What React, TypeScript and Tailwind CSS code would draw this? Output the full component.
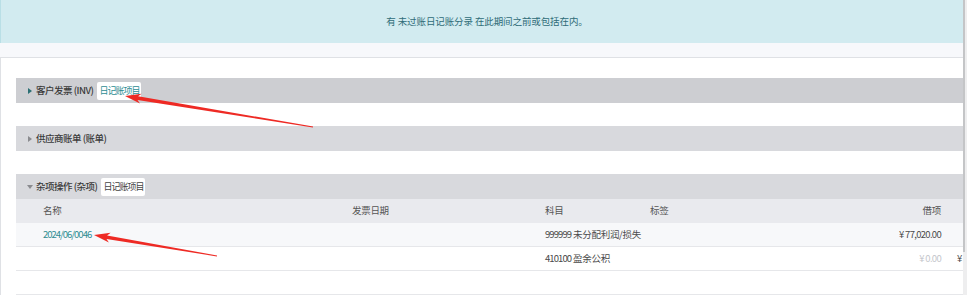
import React from "react";

type Pt = [number, number];

function arrowPoints(tip: Pt, tail: Pt, headLen = 16, headHalf = 5, shaft0 = 1.8, shaft1 = 0.4): string {
  const dx = tail[0] - tip[0];
  const dy = tail[1] - tip[1];
  const len = Math.hypot(dx, dy);
  const ux = dx / len;
  const uy = dy / len;
  const nx = -uy;
  const ny = ux;
  const bx = tip[0] + ux * headLen;
  const by = tip[1] + uy * headLen;
  const sx = tip[0] + ux * (headLen - 3);
  const sy = tip[1] + uy * (headLen - 3);
  const pts: Pt[] = [
    tip,
    [bx + nx * headHalf, by + ny * headHalf],
    [sx + nx * shaft0, sy + ny * shaft0],
    [tail[0] + nx * shaft1, tail[1] + ny * shaft1],
    [tail[0] - nx * shaft1, tail[1] - ny * shaft1],
    [sx - nx * shaft0, sy - ny * shaft0],
    [bx - nx * headHalf, by - ny * headHalf],
  ];
  return pts.map((p) => `${p[0].toFixed(1)},${p[1].toFixed(1)}`).join(" ");
}

function Caret({ open, color }: { open?: boolean; color: string }) {
  return open ? (
    <svg width="6" height="4" viewBox="0 0 6 4" className="shrink-0">
      <polygon points="0,0 6,0 3,4" fill={color} />
    </svg>
  ) : (
    <svg width="4" height="6" viewBox="0 0 4 6" className="shrink-0">
      <polygon points="0,0 4,3 0,6" fill={color} />
    </svg>
  );
}

function SectionHeader({
  title,
  badge,
  badgeColor,
  bg,
  open,
  caretColor,
}: {
  title: React.ReactNode;
  badge?: string;
  badgeColor?: string;
  bg: string;
  open?: boolean;
  caretColor: string;
}) {
  return (
    <div className={`h-[25px] ${bg} flex items-center pl-[11px]`}>
      <div className="w-[6px] flex justify-center">
        <Caret open={open} color={caretColor} />
      </div>
      <span className="ml-[3px] text-[9.5px] font-medium text-[#3b3b3b] leading-none tracking-[-0.5px] whitespace-pre">{title}</span>
      {badge && (
        <span
          className={`ml-[4px] h-[18px] px-[2px] bg-white rounded-[2px] flex items-center text-[9px] leading-none tracking-[-1px] ${badgeColor}`}
        >
          {badge}
        </span>
      )}
    </div>
  );
}

const Num = ({ children }: { children: React.ReactNode }) => (
  <span className="tracking-[-0.9px]">{children}</span>
);

function Row({
  bg,
  name,
  date,
  account,
  label,
  debit,
  debitMuted,
  credit,
  creditMuted,
  header,
}: {
  bg: string;
  name?: React.ReactNode;
  date?: string;
  account?: React.ReactNode;
  label?: string;
  debit?: string;
  debitMuted?: boolean;
  credit?: string;
  creditMuted?: boolean;
  header?: boolean;
}) {
  const txt = header ? "text-[#555]" : "text-[#4a4a4a]";
  return (
    <div className={`h-[24px] ${bg} ${header ? "" : "border-b border-[#e6e7ea]"} flex items-center pl-[27px] text-[9.5px] leading-none ${txt} whitespace-nowrap tracking-[-0.3px]`}>
      <div className="w-[309px] shrink-0">{name}</div>
      <div className="w-[193px] shrink-0">{date}</div>
      <div className="w-[105px] shrink-0">{account}</div>
      <div className="w-[230px] shrink-0">{label}</div>
      <div className={`w-[61px] shrink-0 text-right ${debitMuted ? "text-[#c4c6cb]" : ""}`}>
        {debit && (header ? debit : <span className="tracking-[-0.7px]">{debit}</span>)}
      </div>
      <div className={`ml-[10px] w-[48px] shrink-0 text-right ${creditMuted ? "text-[#c4c6cb]" : ""}`}>
        {credit && <span className="tracking-[-0.7px]">{credit}</span>}
      </div>
    </div>
  );
}

export default function App() {
  return (
    <div className="relative w-[967px] h-[295px] overflow-hidden bg-white flex font-['Noto_Sans_CJK_SC','Noto_Sans',sans-serif]">
      <div className="w-[963px] h-full flex flex-col overflow-hidden">
        <div className="h-[43px] shrink-0 bg-[#d2ebf0] border-l border-[#b9dfe6] flex items-center justify-center pl-[10px]">
          <span className="text-[9.5px] text-[#2f6b78] tracking-[-0.1px] leading-none">有 未过账日记账分录 在此期间之前或包括在内。</span>
        </div>
        <div className="h-[14px] shrink-0 bg-[#f7f8fb]" />
        <div className="flex-1 border-t border-l border-[#dfe1e5] pl-[15px] pt-[20px] flex flex-col">
          <SectionHeader
            title="客户发票 (INV)"
            badge="日记账项目"
            badgeColor="text-[#2e8d93]"
            bg="bg-[#cdced2]"
            caretColor="#2b6f74"
          />
          <div className="h-[23px]" />
          <SectionHeader title="供应商账单 (账单)" bg="bg-[#d8d9dd]" caretColor="#8a8b8f" />
          <div className="h-[23px]" />
          <SectionHeader
            title="杂项操作 (杂项)"
            badge="日记账项目"
            badgeColor="text-[#444]"
            bg="bg-[#d8d9dd]"
            open
            caretColor="#8a8b8f"
          />
          <Row header bg="bg-[#e9eaee]" name="名称" date="发票日期" account="科目" label="标签" debit="借项" />
          <Row
            bg="bg-[#f7f8fa]"
            name={<span className="text-[#2f8d92] tracking-[-1px]">2024/06/0046</span>}
            account={<><Num>999999</Num> 未分配利润/损失</>}
            debit="¥ 77,020.00"
            credit="¥ 0.00"
            creditMuted
          />
          <Row bg="bg-white" account={<><Num>410100</Num> 盈余公积</>} debit="¥ 0.00" debitMuted credit="¥ 77,020.00" />
          <Row bg="bg-white" />
        </div>
      </div>
      <div className="w-[4px] h-full bg-[#eeeeef] flex">
        <div className="w-[2px] h-[252px] bg-[#c4c5c7]" />
      </div>
      <svg className="absolute inset-0 pointer-events-none" width="967" height="295" viewBox="0 0 967 295">
        <polygon points={arrowPoints([125, 96], [313, 127])} fill="#ee2a24" />
        <polygon points={arrowPoints([94, 235], [217, 256])} fill="#ee2a24" />
      </svg>
    </div>
  );
}
